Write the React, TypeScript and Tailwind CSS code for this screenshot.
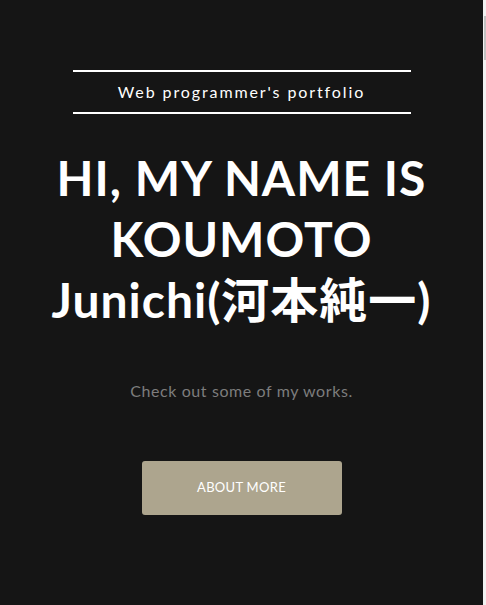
export default function App() {
  return (
    <div className="flex min-h-[605px] w-full bg-[#151515]" style={{ fontFamily: "Lato, 'Noto Sans CJK JP', sans-serif" }}>
      <main className="flex flex-1 flex-col items-center pt-[70px]">
        <div className="flex h-[44px] w-[338px] items-center justify-center border-y-2 border-white">
          <span className="text-[16px] tracking-[1.9px] text-white">Web programmer's portfolio</span>
        </div>
        <h1 className="mt-[33px] w-[460px] text-center text-[48px] font-bold leading-[61px] tracking-[1px] text-white">
          HI, MY NAME IS KOUMOTO Junichi(河本純一)
        </h1>
        <p className="mt-[49px] text-[16px] font-normal leading-[24px] tracking-[0.6px] text-[#7d7d7d]">Check out some of my works.</p>
        <button className="mt-[58px] flex h-[54px] w-[200px] items-center justify-center rounded-[3px] bg-[#ada58e] text-[13px] tracking-[0.3px] text-white">
          ABOUT MORE
        </button>
      </main>
      <div className="relative w-[3px] bg-[#f1f1f1]">
        <div className="absolute left-[1px] top-[16px] h-[44px] w-[2px] bg-[#c1c1c1]" />
      </div>
    </div>
  );
}
